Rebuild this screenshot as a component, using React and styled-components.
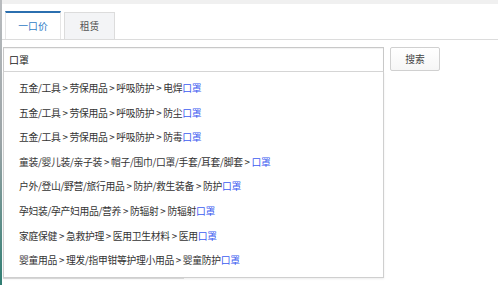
import React from "react";
import styled, { createGlobalStyle } from "styled-components";

const GlobalStyle = createGlobalStyle`
  html, body {
    margin: 0;
    padding: 0;
    background: #fff;
    overflow: hidden;
  }
  body {
    font-family: "Noto Sans CJK SC", "Noto Sans", "Liberation Sans", sans-serif;
    color: #333;
  }
`;

const suggestions = [
  "五金/工具 > 劳保用品 > 呼吸防护 > 电焊",
  "五金/工具 > 劳保用品 > 呼吸防护 > 防尘",
  "五金/工具 > 劳保用品 > 呼吸防护 > 防毒",
  "童装/婴儿装/亲子装 > 帽子/围巾/口罩/手套/耳套/脚套 > ",
  "户外/登山/野营/旅行用品 > 防护/救生装备 > 防护",
  "孕妇装/孕产妇用品/营养 > 防辐射 > 防辐射",
  "家庭保健 > 急救护理 > 医用卫生材料 > 医用",
  "婴童用品 > 理发/指甲钳等护理小用品 > 婴童防护",
];

// category menu that sits under the open suggestion list
const categories = ["男装", "鞋靴"];

function App() {
  return (
    <>
      <GlobalStyle />
      <Frame>
        <TopStrip />
        <Tabs>
          <Tab active>一口价</Tab>
          <Tab>租赁</Tab>
        </Tabs>
        <SearchArea>
          <SearchRow>
            <SearchInput defaultValue="口罩" />
            <SearchButton>搜索</SearchButton>
          </SearchRow>
          <CategoryList>
            {categories.map((c) => (
              <CategoryRow key={c}>
                <span>{c}</span>
                <Arrow>&gt;</Arrow>
              </CategoryRow>
            ))}
          </CategoryList>
          <Dropdown>
            {suggestions.map((s, i) => (
              <Suggestion key={i}>
                {s}
                <Hit>口罩</Hit>
              </Suggestion>
            ))}
          </Dropdown>
        </SearchArea>
      </Frame>
    </>
  );
}

const Frame = styled.div`
  position: relative;
  height: 285px;
  overflow: hidden;
  border-left: 2px solid transparent;
  border-image: linear-gradient(#b9bcbf, #9aa3a6 50%, #2f7d72) 1;
  box-sizing: border-box;
`;

const TopStrip = styled.div`
  height: 4px;
  background: #f0f0f0;
`;

const Tabs = styled.div`
  display: flex;
  gap: 3px;
  margin-top: 7px;
  padding-left: 3px;
  border-bottom: 1px solid #dcdcdc;
`;

const Tab = styled.div`
  width: ${(p) => (p.active ? "56px" : "51px")};
  height: ${(p) => (p.active ? "28px" : "27px")};
  margin-top: ${(p) => (p.active ? "0" : "1px")};
  display: flex;
  align-items: center;
  justify-content: center;
  font-size: 9.8px;
  color: ${(p) => (p.active ? "#2f7cc6" : "#555")};
  background: ${(p) => (p.active ? "#fff" : "#f3f4f6")};
  border: 1px solid ${(p) => (p.active ? "#e6e6e6" : "#dcdcdc")};
  border-top: ${(p) => (p.active ? "2px solid #2b6faf" : "1px solid #dcdcdc")};
  border-bottom: none;
  margin-bottom: ${(p) => (p.active ? "-1px" : "0")};
  box-sizing: border-box;
`;

const SearchArea = styled.div`
  position: relative;
  padding: 7px 0 0 1px;
`;

const SearchRow = styled.div`
  display: flex;
  align-items: flex-start;
  gap: 6px;
`;

const SearchInput = styled.input`
  width: 381px;
  height: 25px;
  box-sizing: border-box;
  border: 1px solid #c8c8c8;
  border-bottom-color: #d6d6d6;
  box-shadow: inset 0 1px 1px rgba(0, 0, 0, 0.06);
  padding: 0 5px;
  font-family: inherit;
  font-size: 10px;
  color: #222;
  outline: none;
`;

const SearchButton = styled.button`
  width: 50px;
  height: 24px;
  border: 1px solid #d0d0d0;
  border-radius: 2px;
  background: linear-gradient(#ffffff, #f6f6f6);
  font-family: inherit;
  font-size: 9.8px;
  color: #444;
  padding: 0;
`;

const CategoryList = styled.div`
  width: 181px;
  margin-top: 206px;
`;

const CategoryRow = styled.div`
  display: flex;
  justify-content: space-between;
  align-items: center;
  height: 24px;
  padding: 0 14px 0 10px;
  border-top: 1px solid #e2e2e2;
  font-size: 9.8px;
  color: #333;
`;

const Arrow = styled.span`
  color: #888;
  font-family: "Liberation Sans", sans-serif;
`;

const Dropdown = styled.div`
  position: absolute;
  top: 32px;
  left: 1px;
  width: 381px;
  height: 206px;
  box-sizing: border-box;
  padding: 4px 0 5px;
  background: #fff;
  border: 1px solid #cfcfcf;
  border-top: none;
  box-shadow: 0 1px 2px rgba(0, 0, 0, 0.08);
`;

const Suggestion = styled.div`
  height: 24.6px;
  line-height: 24.6px;
  padding-left: 15px;
  font-size: 9.8px;
  letter-spacing: -0.3px;
  color: #333;
  white-space: nowrap;
`;

const Hit = styled.span`
  color: #3d5cf0;
`;

export default App;
